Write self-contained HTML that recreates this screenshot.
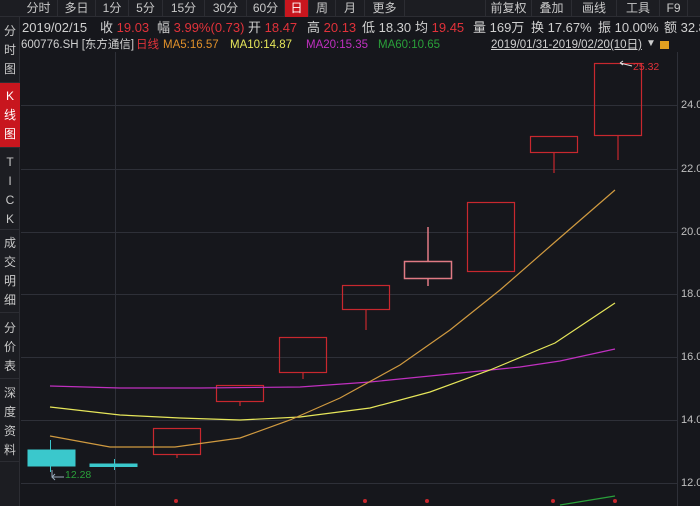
<!DOCTYPE html>
<html><head><meta charset="utf-8"><style>
*{margin:0;padding:0;box-sizing:border-box}
body{width:700px;height:506px;background:#16171c;overflow:hidden;position:relative;font-family:"Liberation Sans","Noto Sans CJK SC",sans-serif;color:#c8c8c8}
.a{position:absolute;white-space:nowrap}
.tab{position:absolute;top:0;height:17px;font-size:12px;line-height:17px;text-align:center;color:#c8c8c8;border-right:1px solid #2c2d33}
.side{position:absolute;left:0;width:20px;font-size:12px;text-align:center;line-height:19px;color:#c8c8c8;border-bottom:1px solid #2c2d33}
.r{color:#e0323a}
.i{position:absolute;top:20px;height:16px;line-height:16px;font-size:13px;color:#d0d0d0;white-space:nowrap}
.m{position:absolute;top:38px;height:14px;line-height:14px;font-size:11.5px;white-space:nowrap}
.ax{position:absolute;left:681px;font-size:11px;color:#c0c0c0}
</style></head><body>
<div class="a" style="left:0;top:0;width:700px;height:17px;background:#1c1d22;border-bottom:1px solid #2c2d33"></div>
<div class="tab" style="left:20px;width:38px">分时</div>
<div class="tab" style="left:58px;width:38px">多日</div>
<div class="tab" style="left:96px;width:33px">1分</div>
<div class="tab" style="left:129px;width:34px">5分</div>
<div class="tab" style="left:163px;width:42px">15分</div>
<div class="tab" style="left:205px;width:42px">30分</div>
<div class="tab" style="left:247px;width:38px">60分</div>
<div class="tab" style="left:285px;width:24px;background:#c8161e;color:#fff">日</div>
<div class="tab" style="left:309px;width:27px">周</div>
<div class="tab" style="left:336px;width:29px">月</div>
<div class="tab" style="left:365px;width:40px">更多</div>
<div class="tab" style="left:485px;width:47px;border-left:1px solid #2c2d33">前复权</div>
<div class="tab" style="left:532px;width:40px">叠加</div>
<div class="tab" style="left:572px;width:45px">画线</div>
<div class="tab" style="left:617px;width:43px">工具</div>
<div class="tab" style="left:660px;width:28px">F9</div>
<div class="a" style="left:0;top:17px;width:20px;height:489px;background:#1c1d22;border-right:1px solid #2c2d33"></div>
<div class="side" style="top:20px;height:63px;padding-top:2px">分<br>时<br>图</div>
<div class="side" style="top:83px;height:65px;background:#c8161e;color:#fff;padding-top:4px">K<br>线<br>图</div>
<div class="side" style="top:150px;height:80px;padding-top:3px">T<br>I<br>C<br>K</div>
<div class="side" style="top:230px;height:83px;padding-top:4px">成<br>交<br>明<br>细</div>
<div class="side" style="top:313px;height:66px;padding-top:6px">分<br>价<br>表</div>
<div class="side" style="top:379px;height:83px;padding-top:5px">深<br>度<br>资<br>料</div>
<div class="i" style="left:22px">2019/02/15</div>
<div class="i" style="left:100px">收 <span class="r">19.03</span></div>
<div class="i" style="left:157px">幅 <span class="r">3.99%(0.73)</span></div>
<div class="i" style="left:248px">开 <span class="r">18.47</span></div>
<div class="i" style="left:307px">高 <span class="r">20.13</span></div>
<div class="i" style="left:362px">低 18.30</div>
<div class="i" style="left:415px">均 <span class="r">19.45</span></div>
<div class="i" style="left:473px">量 169万</div>
<div class="i" style="left:531px">换 17.67%</div>
<div class="i" style="left:598px">振 10.00%</div>
<div class="i" style="left:664px">额 32.8</div>
<div class="m" style="left:21px;color:#d0d0d0">600776.SH [东方通信]</div>
<div class="m" style="left:136px;color:#e0323a">日线</div>
<div class="m" style="left:163px;color:#e0902a">MA5:16.57</div>
<div class="m" style="left:230px;color:#e6e65a">MA10:14.87</div>
<div class="m" style="left:306px;color:#c030c0">MA20:15.35</div>
<div class="m" style="left:378px;color:#2aa03a">MA60:10.65</div>
<div class="a" style="left:491px;top:38px;font-size:11.5px;line-height:14px;color:#d0d0d0;text-decoration:underline">2019/01/31-2019/02/20(10日)</div>
<div class="a" style="left:646px;top:38px;font-size:10px;color:#ccc">▼</div>
<div class="a" style="left:660px;top:41px;width:9px;height:8px;background:#e0a020"></div>
<svg class="a" style="left:0;top:0" width="700" height="506">
<g stroke="#2e3038" stroke-width="1">
<line x1="21" y1="105.5" x2="677" y2="105.5"/><line x1="21" y1="169.5" x2="677" y2="169.5"/>
<line x1="21" y1="232.5" x2="677" y2="232.5"/><line x1="21" y1="294.5" x2="677" y2="294.5"/>
<line x1="21" y1="357.5" x2="677" y2="357.5"/><line x1="21" y1="420.5" x2="677" y2="420.5"/>
<line x1="21" y1="483.5" x2="677" y2="483.5"/>
<line x1="115.5" y1="52" x2="115.5" y2="506"/><line x1="677.5" y1="52" x2="677.5" y2="506"/>
</g>
<g stroke="#3ac8cc" fill="#3ac8cc">
<line x1="50.5" y1="440" x2="50.5" y2="472"/><rect x="28" y="450" width="47" height="16"/>
<line x1="114.5" y1="459" x2="114.5" y2="470"/><rect x="90" y="464" width="47" height="2.5"/>
</g>
<g stroke="#c8282e" fill="none" stroke-width="1.2">
<rect x="153.5" y="428.5" width="47" height="26"/><line x1="177" y1="455" x2="177" y2="458"/>
<rect x="216.5" y="385.5" width="47" height="16"/><line x1="240" y1="402" x2="240" y2="406"/>
<rect x="279.5" y="337.5" width="47" height="35"/><line x1="303" y1="373" x2="303" y2="379"/>
<rect x="342.5" y="285.5" width="47" height="24"/><line x1="366" y1="310" x2="366" y2="330"/>
<rect x="467.5" y="202.5" width="47" height="69"/>
<rect x="530.5" y="136.5" width="47" height="16"/><line x1="554" y1="153" x2="554" y2="173"/>
<rect x="594.5" y="63.5" width="47" height="72"/><line x1="618" y1="136" x2="618" y2="160"/>
</g>
<g stroke="#e07a84" fill="none" stroke-width="1.5">
<rect x="404.5" y="261.5" width="47" height="17"/><line x1="428" y1="227" x2="428" y2="261"/><line x1="428" y1="279" x2="428" y2="286"/>
</g>
<g fill="none" stroke-width="1.2">
<path stroke="#c030c0" d="M50 386 L120 388 L200 388 L300 387 L370 382 L440 375 L520 367 L560 361 L615 349"/>
<path stroke="#e6e65a" d="M50 407 L120 415 L180 418 L240 420 L300 417 L370 408 L430 392 L490 370 L555 343 L615 303"/>
<path stroke="#d09a40" d="M50 436 L110 447 L175 447 L240 438 L290 420 L340 398 L400 365 L450 330 L500 290 L555 242 L615 190"/>
<path stroke="#2aa03a" d="M560 505 L615 496"/>
</g>
<g fill="#c8282e"><circle cx="176" cy="501" r="2"/><circle cx="365" cy="501" r="2"/><circle cx="427" cy="501" r="2"/><circle cx="553" cy="501" r="2"/><circle cx="615" cy="501" r="2"/></g>
<path d="M620 63 L632 66 M620 63 L623 61 M620 63 L623 65" stroke="#ddd" fill="none"/>
<path d="M52 470 L52 477 L64 477 M52 477 L55 474 M52 477 L55 480" stroke="#9ab" fill="none"/>
</svg>
<div class="a" style="left:633px;top:61px;font-size:10.5px;color:#e0323a">25.32</div>
<div class="a" style="left:65px;top:469px;font-size:10.5px;color:#2aa03a">12.28</div>
<div class="ax" style="top:99px">24.00</div>
<div class="ax" style="top:163px">22.00</div>
<div class="ax" style="top:226px">20.00</div>
<div class="ax" style="top:288px">18.00</div>
<div class="ax" style="top:351px">16.00</div>
<div class="ax" style="top:414px">14.00</div>
<div class="ax" style="top:477px">12.00</div>
</body></html>
